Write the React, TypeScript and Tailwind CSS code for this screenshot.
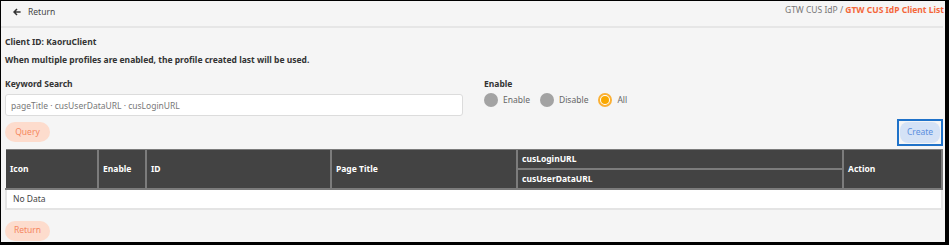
import React, { useState } from "react";

const Radio = ({ label, checked }: { label: string; checked?: boolean }) => (
  <label className="flex items-center gap-[5px] mr-[10px] cursor-pointer">
    {checked ? (
      <span className="w-[14px] h-[14px] rounded-full border-2 border-[#fbb034] bg-white flex items-center justify-center">
        <span className="w-[8px] h-[8px] rounded-full bg-[#f9a800]" />
      </span>
    ) : (
      <span className="w-[14px] h-[14px] rounded-full bg-[#a3a3a3]" />
    )}
    <span className="text-[8.5px] text-[#666]">{label}</span>
  </label>
);

const App = () => {
  const [keyword, setKeyword] = useState("");

  return (
    <div
      className="w-[949px] h-[245px] bg-black pt-[1px] pl-[1px] pr-[4px] pb-[3px]"
      style={{ fontFamily: '"Noto Sans", "Open Sans", sans-serif' }}
    >
      <div className="h-full bg-[#f5f5f5] overflow-hidden">
        {/* top bar */}
        <div className="h-[27px] flex items-start justify-between pl-[12px] pr-[1px] border-b-2 border-[#e6e6e6] mr-[2px]">
          <button className="mt-[5px] flex items-center gap-[7px] text-[8.5px] leading-[12px] text-[#444]">
            <svg width="8" height="8" viewBox="0 0 10 10" fill="none" stroke="#333" strokeWidth="1.9">
              <path d="M9.5 5H1.5M5 1.2L1.3 5 5 8.8" />
            </svg>
            Return
          </button>
          <div className="mt-[3px] text-[8.5px] leading-[12px] mr-[-2px]">
            <span className="text-[#777]">GTW CUS IdP / </span>
            <span className="text-[#f4673a] font-bold">GTW CUS IdP Client List</span>
          </div>
        </div>

        <div className="pl-[4px] pr-[2px]">
          <div className="mt-[5px] text-[8.5px] font-bold text-[#333] leading-[18px]">Client ID: KaoruClient</div>
          <div className="text-[8.5px] font-bold text-[#333] leading-[18px]">
            When multiple profiles are enabled, the profile created last will be used.
          </div>

          <div className="mt-[8px] flex items-start">
            <div className="w-[458px]">
              <div className="text-[8.5px] font-bold text-[#333] leading-[14px]">Keyword Search</div>
              <input
                value={keyword}
                onChange={(e) => setKeyword(e.target.value)}
                placeholder="pageTitle · cusUserDataURL · cusLoginURL"
                className="mt-[3px] block w-full h-[22px] bg-white border border-[#dcdcdc] rounded-[3px] px-[5px] text-[8.5px] placeholder:text-[#777] outline-none"
              />
            </div>
            <div className="ml-[21px]">
              <div className="text-[8.5px] font-bold text-[#333] leading-[14px]">Enable</div>
              <div className="flex items-center mt-[2px]">
                <Radio label="Enable" />
                <Radio label="Disable" />
                <Radio label="All" checked />
              </div>
            </div>
          </div>

          <div className="mt-[6px] h-[24px] flex items-start justify-between">
            <button className="w-[45px] h-[20px] rounded-full bg-[#fddccd] text-[8.5px] text-[#f5875f]">Query</button>
            <div className="-mt-[3px] border-2 border-[#1f72c9] p-[1px]">
              <button className="block w-[40px] h-[21px] rounded-[8px] bg-[#d4e2f6] text-[8.5px] text-[#5b8fde]">Create</button>
            </div>
          </div>

          <table className="mt-[3px] w-full table-fixed border-collapse text-[8.5px] leading-[12px]">
            <thead className="bg-[#434343] text-white font-bold">
              <tr className="h-[19px]">
                <th rowSpan={2} className="w-[92px] p-0 text-left pl-[4px] border-2 border-t border-l-0 border-[#7c7c7c]">Icon</th>
                <th rowSpan={2} className="w-[48px] p-0 text-left pl-[4px] border-2 border-t border-[#7c7c7c]">Enable</th>
                <th rowSpan={2} className="w-[185px] p-0 text-left pl-[4px] border-2 border-t border-[#7c7c7c]">ID</th>
                <th rowSpan={2} className="w-[186px] p-0 text-left pl-[4px] border-2 border-t border-[#7c7c7c]">Page Title</th>
                <th className="w-[326px] p-0 text-left pl-[4px] border-2 border-t border-[#7c7c7c]">cusLoginURL</th>
                <th rowSpan={2} className="p-0 text-left pl-[4px] border-2 border-t border-[#7c7c7c]">Action</th>
              </tr>
              <tr className="h-[20px]">
                <th className="p-0 text-left pl-[4px] border-2 border-[#7c7c7c]">cusUserDataURL</th>
              </tr>
            </thead>
            <tbody>
              <tr className="h-[20px] bg-white">
                <td colSpan={6} className="p-0 pl-[6px] text-[#444] border-2 border-t-0 border-[#e4e4e4]">No Data</td>
              </tr>
            </tbody>
          </table>

          <button className="block mt-[11px] w-[45px] h-[20px] rounded-full bg-[#fddccd] text-[8.5px] text-[#f5875f]">Return</button>
        </div>
      </div>
    </div>
  );
};

export default App;
